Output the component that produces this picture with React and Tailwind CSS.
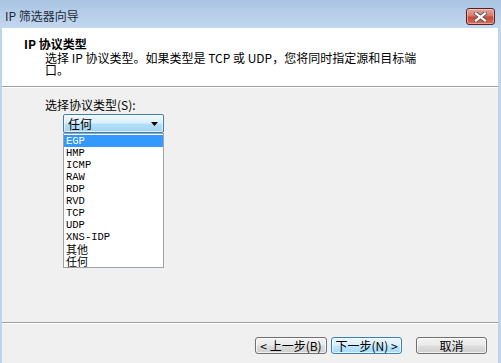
export default function App() {
  const items = ["EGP", "HMP", "ICMP", "RAW", "RDP", "RVD", "TCP", "UDP", "XNS-IDP", "其他", "任何"];
  return (
    <div className="w-[501px] h-[363px] bg-[#bdd4ec] flex flex-col overflow-hidden font-['Noto_Sans_CJK_SC',sans-serif] text-[12px] text-black select-none">
      {/* title bar */}
      <div className="h-[28px] shrink-0 flex items-center justify-between pl-[5px] pr-[6px] bg-[linear-gradient(#a9c4e2,#c3d8ef)]">
        <span className="text-[12px] leading-[12px] text-[#1e2a3a] mt-[4px]">IP 筛选器向导</span>
        <div className="w-[29px] h-[17px] mt-[5px] rounded-[3px] border border-[#4f2525] bg-[linear-gradient(#e8a89e_0%,#d7786a_45%,#c44a3a_55%,#d86e5c_100%)] shadow-[inset_0_0_0_1px_rgba(255,220,210,0.5)] flex items-center justify-center">
          <svg width="13" height="10" viewBox="0 0 13 10">
            <path d="M2 1.5 L11 8.5 M11 1.5 L2 8.5" stroke="#5a5a5a" strokeWidth="4" strokeLinecap="square" />
            <path d="M2 1.5 L11 8.5 M11 1.5 L2 8.5" stroke="#ffffff" strokeWidth="2.2" strokeLinecap="square" />
          </svg>
        </div>
      </div>
      {/* client area */}
      <div className="flex-1 ml-[2px] mr-[3px] bg-[#f0f0f0] flex flex-col">
        {/* header */}
        <div className="h-[58px] shrink-0 bg-white pt-[10px] pl-[22px]">
          <div className="font-bold leading-[12px]">IP 协议类型</div>
          <div className="mt-[2px] pl-[21px] leading-[12px]">
            <div>选择 IP 协议类型。如果类型是 TCP 或 UDP，您将同时指定源和目标端</div>
            <div>口。</div>
          </div>
        </div>
        <div className="h-[1px] bg-[#a0a0a0] shrink-0" />
        <div className="h-[1px] bg-white shrink-0" />
        {/* body */}
        <div className="flex-1 pt-[11px] pl-[43px]">
          <div className="leading-[12px]">选择协议类型(S):</div>
          <div className="relative ml-[18px] mt-[3px] w-[101px]">
            <div className="h-[19px] rounded-[2px] border border-[#3c7fb1] bg-[linear-gradient(#eef8fe_0%,#dcf0fb_45%,#b5dff7_55%,#9fd3f2_100%)] shadow-[inset_0_0_0_1px_rgba(255,255,255,0.6)] flex items-center justify-between pl-[4px] pr-[5px]">
              <span className="leading-[12px]">任何</span>
              <svg width="7" height="4" viewBox="0 0 7 4">
                <path d="M0 0 H7 L3.5 4 Z" fill="#000" />
              </svg>
            </div>
            <div className="absolute left-0 top-full w-[101px] h-[135px] bg-white border border-[#9da3ab] flex flex-col py-[1px]">
              {items.map((it, i) => (
                <div
                  key={it}
                  className={`h-[12px] shrink-0 flex items-center pl-[2px] ${i === 0 ? "bg-[#3399ff] text-white" : "text-black"}`}
                >
                  {/[A-Z]/.test(it) ? (
                    <span className="font-['Liberation_Mono',monospace] text-[10.5px] leading-[12px]">{it}</span>
                  ) : (
                    <span className="text-[11px] leading-[12px]">{it}</span>
                  )}
                </div>
              ))}
            </div>
          </div>
        </div>
        <div className="h-[1px] bg-[#a0a0a0] shrink-0" />
        <div className="h-[1px] bg-white shrink-0" />
        {/* footer */}
        <div className="h-[39px] shrink-0 flex items-start justify-end pt-[13px] pr-[11px]">
          <div className="w-[72px] h-[17px] rounded-[3px] border border-[#707070] bg-[linear-gradient(#f2f2f2_0%,#ebebeb_45%,#dddddd_55%,#cfcfcf_100%)] shadow-[inset_0_0_0_1px_rgba(255,255,255,0.7)] flex items-center justify-center leading-[12px]">
            &lt; 上一步(B)
          </div>
          <div className="w-[71px] h-[17px] ml-[4px] rounded-[3px] border border-[#3c7fb1] bg-[linear-gradient(#eaf6fd_0%,#d9f0fc_45%,#bee6fd_55%,#a7d9f5_100%)] shadow-[inset_0_0_0_1px_rgba(255,255,255,0.7)] flex items-center justify-center leading-[12px]">
            下一步(N) &gt;
          </div>
          <div className="w-[71px] h-[17px] ml-[14px] rounded-[3px] border border-[#707070] bg-[linear-gradient(#f2f2f2_0%,#ebebeb_45%,#dddddd_55%,#cfcfcf_100%)] shadow-[inset_0_0_0_1px_rgba(255,255,255,0.7)] flex items-center justify-center leading-[12px]">
            取消
          </div>
        </div>
      </div>
    </div>
  );
}
